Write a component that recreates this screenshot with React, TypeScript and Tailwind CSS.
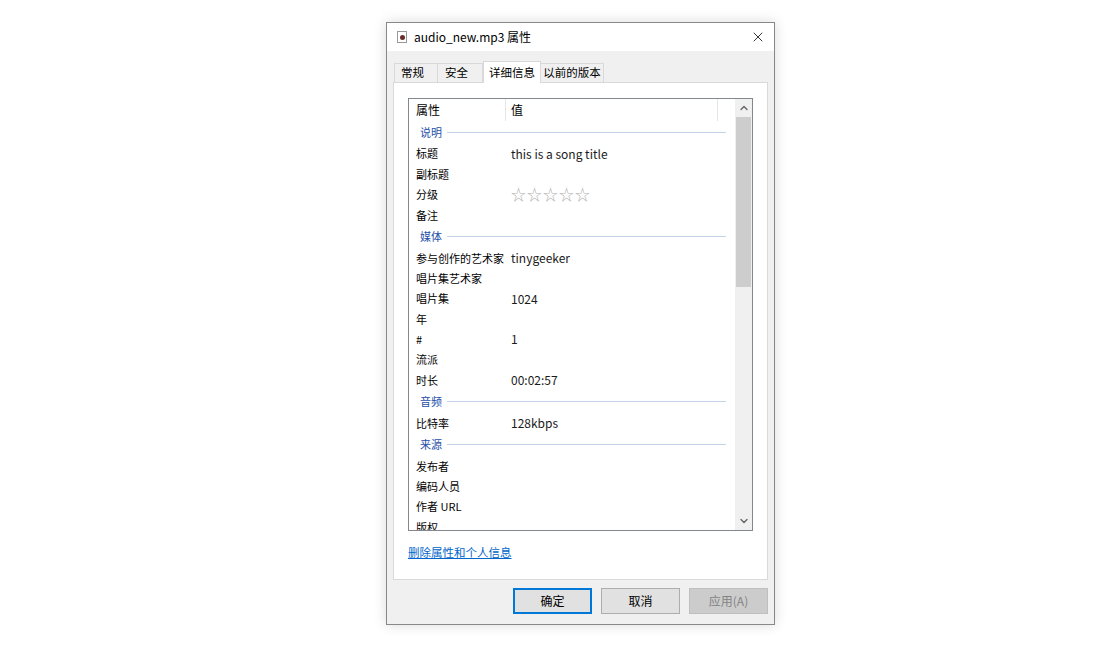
import { ChevronUp, ChevronDown, X } from "lucide-react";

type Item = { group?: string; name?: string; value?: string; stars?: boolean };

const items: Item[] = [
  { group: "说明" },
  { name: "标题", value: "this is a song title" },
  { name: "副标题" },
  { name: "分级", stars: true },
  { name: "备注" },
  { group: "媒体" },
  { name: "参与创作的艺术家", value: "tinygeeker" },
  { name: "唱片集艺术家" },
  { name: "唱片集", value: "1024" },
  { name: "年" },
  { name: "#", value: "1" },
  { name: "流派" },
  { name: "时长", value: "00:02:57" },
  { group: "音频" },
  { name: "比特率", value: "128kbps" },
  { group: "来源" },
  { name: "发布者" },
  { name: "编码人员" },
  { name: "作者 URL" },
  { name: "版权" },
];

export default function App() {
  return (
    <div
      className="w-[1098px] h-[648px] bg-white flex pl-[386px] pt-[22px] text-[12px] text-black"
      style={{ fontFamily: '"Noto Sans CJK SC", "Liberation Sans", sans-serif' }}
    >
      <div className="w-[389px] h-[603px] border border-[#888] bg-[#f0f0f0] flex flex-col shadow-[0_0_12px_rgba(0,0,0,0.15)]">
        {/* Title bar */}
        <div className="h-[28px] bg-white flex items-center pl-[10px] pr-[8px]">
          <div className="w-[10px] h-[12px] border border-[#999] bg-white flex items-center justify-center mr-[7px]">
            <div className="w-[5px] h-[5px] rounded-full bg-[#6a2b2b]" />
          </div>
          <span className="text-[12px] flex-1">audio_new.mp3 属性</span>
          <X className="w-[16px] h-[16px]" strokeWidth={1.2} />
        </div>

        {/* Tabs */}
        <div className="flex items-end pl-[7px] mt-[10px] h-[21px] text-[11.5px]">
          <div className="w-[44px] h-[19px] pl-[6px] border border-[#d9d9d9] border-b-0 bg-[#f0f0f0] flex items-center">常规</div>
          <div className="w-[45px] h-[19px] pl-[7px] border border-[#d9d9d9] border-b-0 border-l-0 bg-[#f0f0f0] flex items-center">安全</div>
          <div className="w-[58px] h-[22px] justify-center border border-[#d9d9d9] border-b-0 bg-white flex items-center relative top-[1px] z-10">详细信息</div>
          <div className="w-[63px] h-[19px] justify-center border border-[#d9d9d9] border-b-0 border-l-0 bg-[#f0f0f0] flex items-center">以前的版本</div>
        </div>

        {/* Panel */}
        <div className="mx-[6px] h-[498px] bg-white border border-[#d9d9d9] px-[14px] pt-[15px]">
          <div className="h-[433px] border border-[#828790] flex overflow-hidden">
            <div className="flex-1 overflow-hidden">
              <div className="h-[22px] flex items-center">
                <div className="w-[97px] h-full flex items-center pl-[7px] border-r border-[#e5e5e5]">属性</div>
                <div className="w-[212px] h-full flex items-center pl-[5px] border-r border-[#e5e5e5]">值</div>
              </div>
              {items.map((it, i) =>
                it.group ? (
                  <div key={i} className="h-[22.5px] flex items-center pl-[11px] pr-[9px]">
                    <span className="text-[#1e4fa8] text-[11px]">{it.group}</span>
                    <div className="flex-1 h-px bg-[#c6d3e8] ml-[5px]" />
                  </div>
                ) : (
                  <div key={i} className="h-[20.4px] flex items-center pl-[7px]">
                    <span className="w-[95px] whitespace-nowrap text-[11px]">{it.name}</span>
                    {it.stars ? (
                      <span className="text-[#b3b3b3] text-[15px] tracking-[1px]">☆☆☆☆☆</span>
                    ) : (
                      <span className="text-[#1a1a1a]">{it.value}</span>
                    )}
                  </div>
                )
              )}
            </div>
            <div className="w-[17px] bg-[#f0f0f0] flex flex-col items-center">
              <ChevronUp className="w-[12px] h-[12px] mt-[3px] text-[#606060]" strokeWidth={2.5} />
              <div className="w-[15px] h-[170px] bg-[#cdcdcd] mt-[3px]" />
              <div className="flex-1" />
              <ChevronDown className="w-[12px] h-[12px] mb-[3px] text-[#606060]" strokeWidth={2.5} />
            </div>
          </div>
          <div className="mt-[12px]">
            <span className="text-[#0066cc] underline text-[11.5px]">删除属性和个人信息</span>
          </div>
        </div>

        {/* Buttons */}
        <div className="flex justify-end gap-[9px] pr-[6px] mt-[8px]">
          <div className="w-[79px] h-[26px] bg-[#e1e1e1] border-2 border-[#0078d7] flex items-center justify-center">确定</div>
          <div className="w-[79px] h-[26px] bg-[#e1e1e1] border border-[#adadad] flex items-center justify-center">取消</div>
          <div className="w-[79px] h-[26px] bg-[#cccccc] border border-[#bfbfbf] text-[#838383] flex items-center justify-center">应用(A)</div>
        </div>
      </div>
    </div>
  );
}
